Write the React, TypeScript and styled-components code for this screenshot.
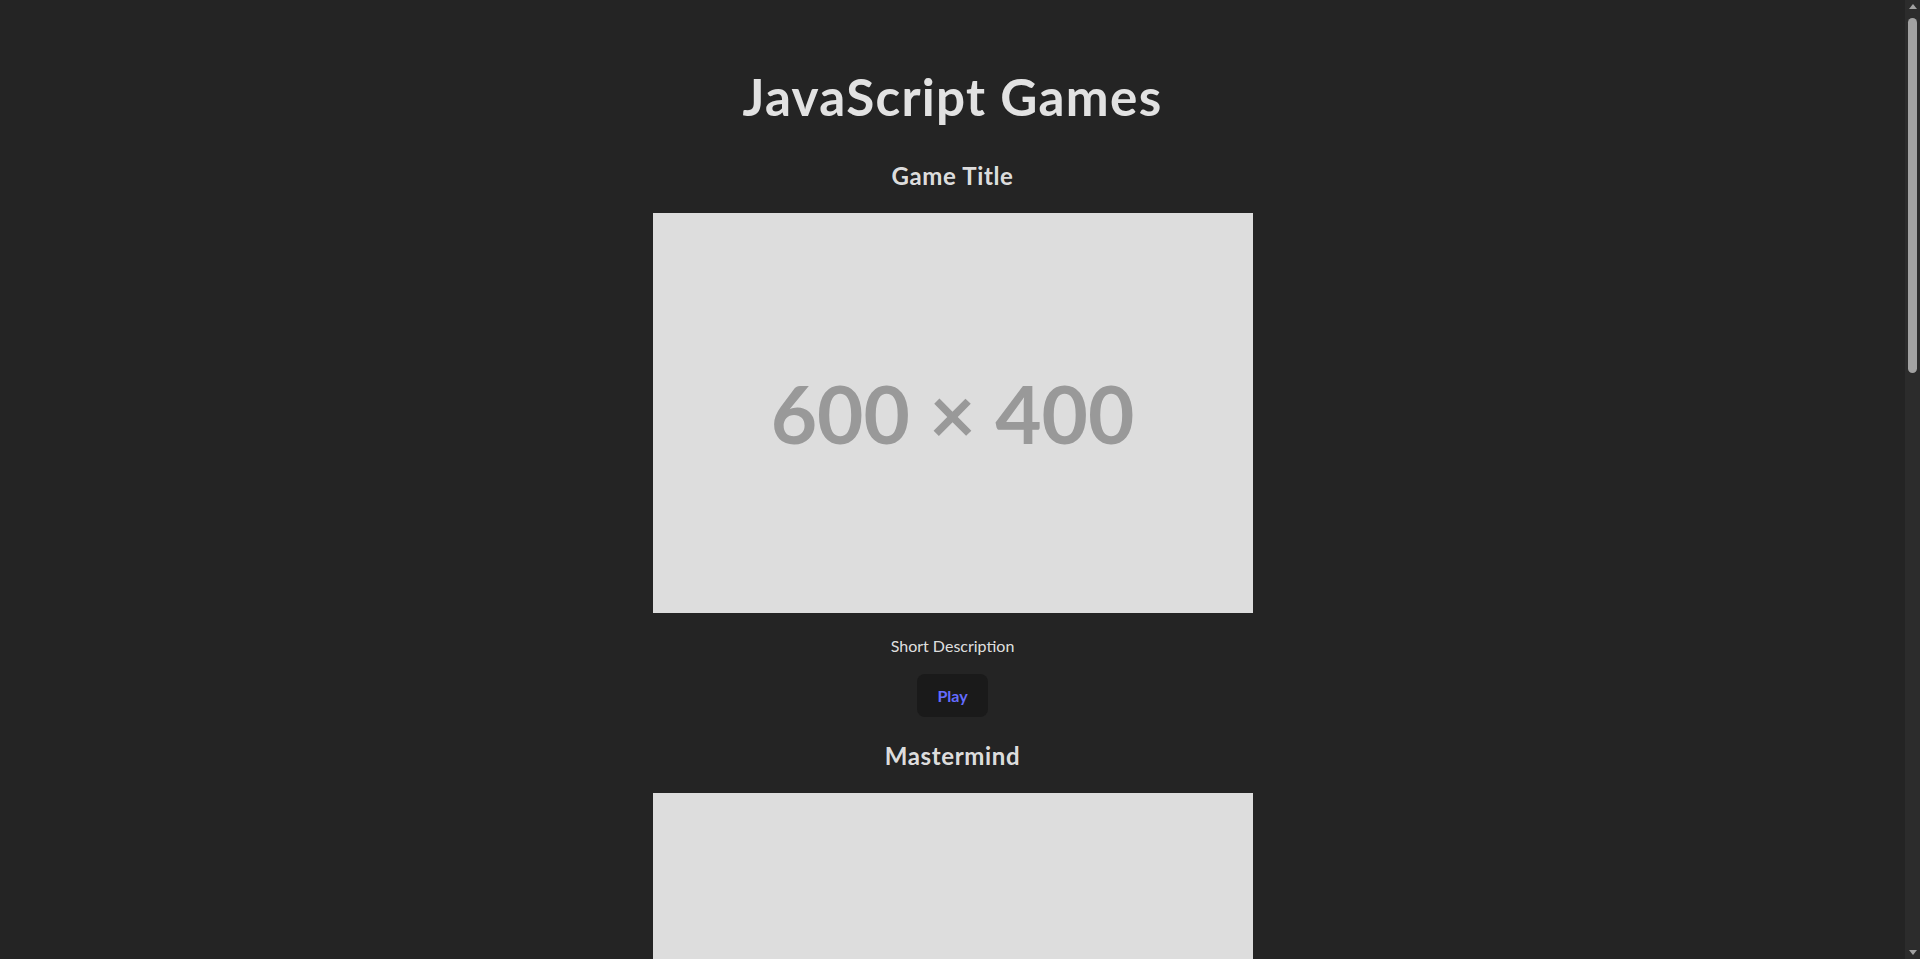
import React from "react";
import styled, { createGlobalStyle } from "styled-components";

const GlobalStyle = createGlobalStyle`
  html {
    color-scheme: dark;
    background-color: #242424;
  }
  body {
    margin: 0 15px 0 0;
    min-width: 320px;
    background-color: #242424;
    color: rgba(255, 255, 255, 0.87);
    font-family: Lato, "Open Sans", "Liberation Sans", sans-serif;
    font-size: 16px;
    line-height: 1.5;
    font-weight: 400;
    -webkit-font-smoothing: antialiased;
  }
`;

const Page = styled.main`
  max-width: 1280px;
  margin: 0 auto;
  padding: 32px;
  display: flex;
  flex-direction: column;
  align-items: center;
  text-align: center;
`;

const Heading = styled.h1`
  font-size: 51.2px;
  line-height: 1.1;
  font-weight: 700;
  letter-spacing: 1.3px;
  margin: 36.3px 0 32.3px;
`;

const GameList = styled.div`
  display: flex;
  flex-direction: column;
  align-items: center;
  gap: 20px;
`;

const GameCard = styled.section`
  display: flex;
  flex-direction: column;
  align-items: center;
  gap: 16px;
`;

const GameName = styled.h2`
  font-size: 24px;
  line-height: 36px;
  font-weight: 700;
  letter-spacing: 0.65px;
  margin: 1px 0 3px;
`;

const Thumb = styled.div`
  width: 600px;
  height: 400px;
  background: #dddddd;
  color: #999999;
  display: flex;
  align-items: center;
  justify-content: center;
  font-family: Lato, "Open Sans", sans-serif;
  font-weight: 700;
  font-size: 80px;
  line-height: 1;
`;

const Description = styled.p`
  font-size: 16px;
  line-height: 24px;
  margin: 5.4px 0 0;
`;

const PlayButton = styled.button`
  border-radius: 8px;
  border: 1px solid transparent;
  padding: 9.6px 19.2px;
  font-size: 16px;
  line-height: 21.3px;
  font-weight: 500;
  font-family: inherit;
  background-color: #1a1a1a;
  cursor: pointer;
`;

const PlayLink = styled.a`
  color: #646cff;
  font-weight: 700;
  text-decoration: none;
`;

const ScrollTrack = styled.div`
  position: fixed;
  top: 0;
  right: 0;
  bottom: 0;
  width: 15px;
  box-sizing: border-box;
  padding: 4px 3px;
  display: flex;
  flex-direction: column;
  align-items: center;
  background: #2c2c2c;
`;

const ScrollThumb = styled.div`
  margin-top: 9px;
  width: 9px;
  height: 355px;
  border-radius: 5px;
  background: #a2a2a2;
`;

const Spacer = styled.div`
  flex: 1;
`;

const Arrow = styled.div<{ $down?: boolean }>`
  width: 0;
  height: 0;
  border-left: 4px solid transparent;
  border-right: 4px solid transparent;
  ${(p) =>
    p.$down
      ? "border-top: 5px solid #a2a2a2;"
      : "border-bottom: 5px solid #a2a2a2;"}
`;

const games = ["Game Title", "Mastermind", "Snake", "Tic Tac Toe"];

export default function App() {
  return (
    <>
      <GlobalStyle />
      <Page>
        <Heading>JavaScript Games</Heading>
        <GameList>
          {games.map((g) => (
            <GameCard key={g}>
              <GameName>{g}</GameName>
              <Thumb>600 × 400</Thumb>
              <Description>Short Description</Description>
              <PlayButton>
                <PlayLink href="#">Play</PlayLink>
              </PlayButton>
            </GameCard>
          ))}
        </GameList>
      </Page>
      <ScrollTrack aria-hidden="true">
        <Arrow />
        <ScrollThumb />
        <Spacer />
        <Arrow $down />
      </ScrollTrack>
    </>
  );
}
